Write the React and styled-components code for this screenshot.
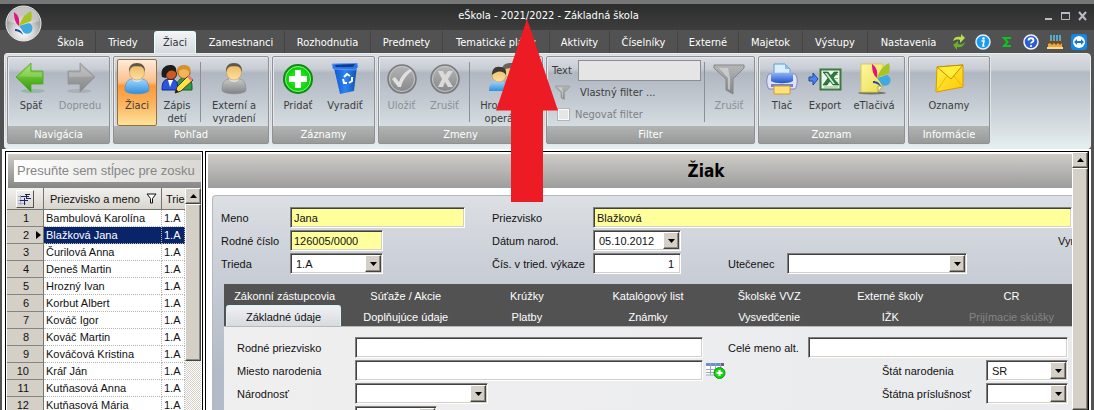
import React from 'react';
import styled, { createGlobalStyle, css } from 'styled-components';

const Global = createGlobalStyle`
  *, *::before, *::after { box-sizing: border-box; }
  body { margin: 0; background: #fff; overflow: hidden; }
  button, input, select { font: inherit; color: inherit; margin: 0; padding: 0; border: 0; border-radius: 0; }
  button { background: none; cursor: pointer; }
  svg { display: block; }
`;

const uiFont = '"DejaVu Sans Condensed", "DejaVu Sans", sans-serif';
const formFont = '"Liberation Sans", Arial, sans-serif';

/* ---------- window ---------- */

const Window = styled.div`
  position: relative;
  display: flex;
  flex-direction: column;
  height: 100vh;
  overflow: hidden;
  padding: 0 3px 0 2px;
  background: #525252;
  font: 11px/13px ${uiFont};
`;

const TitleBar = styled.header`
  display: grid;
  grid-template-columns: 1fr auto 1fr;
  align-items: center;
  flex: none;
  height: 30px;
  margin: 0 -3px 0 -2px;
  padding: 0 5px 3px 8px;
  border-top: 4px solid #767676;
  background: linear-gradient(#2c2e2d, #3d3d3d);
  color: #fff;
`;

const Title = styled.h1`
  grid-column: 2;
  margin: 0;
  font: 11px/13px ${uiFont};
`;

const WindowControls = styled.div`
  display: flex;
  justify-content: flex-end;
  gap: 5px;
`;

const Logo = styled.button`
  position: absolute;
  left: 5px;
  top: 5px;
  width: 37px;
  height: 37px;
`;

const MenuBar = styled.nav`
  display: flex;
  flex: none;
  height: 23px;
  padding-left: 44px;
  background: #525252;
`;

const MenuTab = styled.button`
  width: ${(p) => p.$w}px;
  height: 22px;
  margin-top: 1px;
  color: #fff;
  white-space: nowrap;
  border-right: 1px solid ${(p) => (p.$plain ? 'transparent' : '#434343')};
  ${(p) =>
    p.$active &&
    css`
      margin: 1px 2px 0 3px;
      border: 1px solid #e2ffff;
      border-bottom: 0;
      border-radius: 3px 3px 0 0;
      background: linear-gradient(#f3f4f6, #d5d9df);
      color: #333;
    `}
`;

const QuickIcons = styled.div`
  display: flex;
  align-items: center;
  gap: 8px;
  margin-left: auto;
  padding-right: 4px;
`;

/* ---------- ribbon ---------- */

const Ribbon = styled.div`
  display: flex;
  flex: none;
  gap: 3px;
  height: 96px;
  margin: 0 0 0 2px;
  padding: 2px 2px 4px;
  border: 1px solid #e6eeee;
  border-radius: 3px 4px 3px 3px;
  background: linear-gradient(#dadde2 0, #c9cdd5 16px, #b3bac4 18px, #c2c9d0 45px, #dbe3e6 80px, #e6f1f1 96px);
`;

const Group = styled.section`
  display: flex;
  flex-direction: column;
  width: ${(p) => p.$w}px;
  border: 1px solid #8f9194;
  border-radius: 2px;
  box-shadow: 0 0 0 1px #e3e6e9, inset 1px 1px #e6e8ec;
  background: linear-gradient(#d9dce1 0, #c8ccd4 12px, #b0b7c1 16px, #c0c7cf 40px, #d6dee2 70px);
`;

const GroupBody = styled.div`
  display: flex;
  flex: 1;
  padding: 2px 0 0 ${(p) => p.$pad || 1}px;
`;

const GroupCaption = styled.h2`
  margin: 0;
  height: 18px;
  font: 11px/17px ${uiFont};
  text-align: center;
  color: #fff;
  background: linear-gradient(#b2b4b4, #989a99);
`;

const RibbonButton = styled.button`
  display: flex;
  flex-direction: column;
  align-items: center;
  flex: none;
  gap: 4px;
  width: ${(p) => p.$w}px;
  height: 67px;
  padding-top: 3px;
  border: 1px solid transparent;
  border-radius: 2px;
  color: ${(p) => (p.disabled ? '#8b8f94' : '#3c3c3c')};
  line-height: 13px;
  ${(p) =>
    p.$active &&
    css`
      border-color: #95703f;
      background: linear-gradient(#fdeadb 0, #fbc08a 22px, #fa9838 26px, #fbb660 45px, #ffe6a0 66px);
    `}
`;

const Divider = styled.i`
  flex: none;
  width: 1px;
  height: 60px;
  margin: 3px 1px 0 3px;
  background: #8b8f97;
`;

const FilterForm = styled.div`
  display: flex;
  flex-direction: column;
  width: 153px;
  padding-left: 4px;
  color: #3c3c3c;
`;

const FilterLine = styled.div`
  display: flex;
  align-items: center;
  gap: ${(p) => p.$gap}px;
  height: 22px;
  padding-left: ${(p) => p.$pad || 0}px;
  color: ${(p) => (p.$muted ? '#7d8084' : 'inherit')};
`;

const FilterInput = styled.input`
  flex: 1;
  min-width: 0;
  height: 21px;
  border: 1px solid #8c8e91;
  background: #e5e5e5;
`;

const Check = styled.input`
  appearance: none;
  width: 13px;
  height: 13px;
  border: 1px solid #b4b4b4;
  background: #e6e6e6;
  box-shadow: inset 0 0 0 1px #fafafa;
`;

/* ---------- work area ---------- */

const Workspace = styled.main`
  display: flex;
  flex: 1;
  gap: 2px;
  min-height: 0;
  padding: 2px 2px 0 3px;
  background: #fff;
  font: 11px/14px ${formFont};
  color: #111;
`;

const Pane = styled.section`
  display: flex;
  flex-direction: column;
  width: ${(p) => (p.$w ? `${p.$w}px` : 'auto')};
  flex: ${(p) => (p.$w ? 'none' : '1')};
  min-width: 0;
  border: solid #000;
  border-width: 1px 1px 0;
  padding-top: 2px;
  overflow: hidden;
`;

const GroupByBar = styled.div`
  flex: none;
  height: 34px;
  margin: 0 1px 0 2px;
  padding: 6px 0 6px 6px;
  background: linear-gradient(#cfccc6, #868686);
`;

const GroupByHint = styled.p`
  margin: 0;
  height: 22px;
  padding-left: 3px;
  overflow: hidden;
  white-space: nowrap;
  font-size: 13px;
  line-height: 21px;
  color: #868686;
  background: linear-gradient(90deg, #fff, #d9d8d4);
`;

const ListBody = styled.div`
  display: flex;
  flex: 1;
  min-height: 0;
  overflow: hidden;
  padding: 0 1px;
`;

const Table = styled.table`
  flex: 1;
  width: 178px;
  height: max-content;
  table-layout: fixed;
  border-collapse: separate;
  border-spacing: 0;
`;

const HeadCell = styled.th`
  height: 22px;
  padding: 0 0 0 ${(p) => p.$pad || 6}px;
  overflow: hidden;
  white-space: nowrap;
  text-align: left;
  font-weight: normal;
  background: linear-gradient(#f2f1ee, #d8d5ce);
  border-right: 1px solid #77756f;
  border-bottom: 1px solid #77756f;
  &:last-child { border-right: 0; }
`;

const HeadLabel = styled.span`
  display: flex;
  align-items: center;
  justify-content: space-between;
  padding-right: 4px;
`;

const ColumnButton = styled.button`
  display: grid;
  place-items: center;
  width: 18px;
  height: 18px;
  border: 1px solid;
  border-color: #fff #55534e #55534e #fff;
`;

const NumberCell = styled.th`
  position: relative;
  height: 17px;
  padding: 0 14px 0 0;
  text-align: right;
  font: 11px/16px ${formFont};
  background: #d4d0c8;
  border-right: 1px solid #77756f;
  border-bottom: 1px solid #86847e;
  ${(p) =>
    p.$current &&
    css`
      &::after {
        content: '';
        position: absolute;
        right: 2px;
        top: 4px;
        border: 4px solid transparent;
        border-left: 5px solid #000;
        border-right: 0;
      }
    `}
`;

const Cell = styled.td`
  height: 17px;
  padding: 0 0 0 2px;
  overflow: hidden;
  white-space: nowrap;
  line-height: 16px;
  border-right: 1px dotted #b5b5b5;
  border-bottom: 1px dotted #b5b5b5;
  ${(p) => p.$selected && css`background: #0a246a; color: #fff;`}
`;

const ScrollBar = styled.div`
  display: flex;
  flex-direction: column;
  flex: none;
  width: 16px;
  background: repeating-conic-gradient(#d4d0c8 0 25%, #fff 0 50%) 0 0 / 2px 2px;
`;

const raised = css`
  background: #d4d0c8;
  border: 1px solid;
  border-color: #fff #45433f #45433f #fff;
  box-shadow: inset -1px -1px #8d8a84;
`;

const ScrollButton = styled.button`
  display: grid;
  place-items: center;
  flex: none;
  height: 16px;
  ${raised}
`;

const Thumb = styled.div`
  height: ${(p) => p.$h};
  ${raised}
`;

/* ---------- record form ---------- */

const RecordRow = styled.div`
  display: flex;
  flex: 1;
  min-height: 0;
  margin-top: -2px;
`;

const Record = styled.div`
  display: flex;
  flex-direction: column;
  flex: 1;
  min-width: 0;
  padding: 2px 0 0 2px;
`;

const RecordTitle = styled.h2`
  flex: none;
  height: 34px;
  margin: 0 0 7px;
  padding-left: 132px;
  text-align: center;
  font: bold 17px/34px ${uiFont};
  color: #000;
  background: linear-gradient(#cfccc7, #9d9d9d);
`;

const Card = styled.div`
  display: flex;
  flex-direction: column;
  flex: 1;
  min-height: 0;
  overflow: hidden;
  margin-left: 4px;
  padding-top: 10px;
  border: solid #b5b7ba;
  border-width: 1px 0 0 1px;
  border-radius: 4px 0 0 0;
  background: linear-gradient(#dcdfe3, #c8cdd6 80px, #b2bbc7 175px);
`;

const HeaderRow = styled.div`
  display: grid;
  grid-template-columns: 69px 202px 101px 1fr;
  align-items: center;
  flex: none;
  height: 23px;
  padding-left: 8px;
`;

const Inline = styled.div`
  display: flex;
  align-items: center;
  min-width: 0;
`;

const Label = styled.label`
  white-space: nowrap;
  padding-left: ${(p) => p.$indent || 0}px;
  width: ${(p) => (p.$w ? `${p.$w}px` : 'auto')};
  margin-left: ${(p) => (p.$end ? 'auto' : 0)};
  flex: none;
`;

const ClippedLabel = styled.span`
  width: 14px;
  margin-left: auto;
  overflow: hidden;
`;

const sunken = css`
  border: 1px solid;
  border-color: #808080 #fff #fff #808080;
  box-shadow: inset 1px 1px #404040, inset -1px -1px #d4d0c8;
  background: ${(p) => (p.$required ? '#ffff9c' : '#fff')};
`;

const TextInput = styled.input`
  width: ${(p) => (p.$w ? `${p.$w}px` : '100%')};
  height: 21px;
  padding: 0 6px 0 3px;
  text-align: ${(p) => (p.$right ? 'right' : 'left')};
  ${sunken}
`;

const Combo = styled.span`
  position: relative;
  display: block;
  flex: none;
  width: ${(p) => p.$w}px;
  height: 21px;
  padding: 2px 18px 2px 5px;
  ${sunken}
  & > input, & > select {
    display: block;
    appearance: none;
    width: 100%;
    height: 15px;
    background: none;
    outline: 0;
  }
`;

const DropButton = styled.span`
  position: absolute;
  right: 1px;
  top: 1px;
  display: grid;
  place-items: center;
  width: 16px;
  height: 17px;
  pointer-events: none;
  ${raised}
`;

const DetailTabs = styled.div`
  display: grid;
  grid-template-columns: repeat(7, 1fr);
  grid-auto-rows: 21px;
  flex: none;
  margin: 9px 0 0 11px;
  background: #525252;
  border-bottom: 1px solid #b9b9b9;
`;

const DetailTab = styled.button`
  color: ${(p) => (p.disabled ? '#858585' : '#fff')};
  padding-top: 2px;
  white-space: nowrap;
  ${(p) =>
    p.$active &&
    css`
      margin: 0 4px 0 2px;
      border: 1px solid #d9f4f4;
      border-bottom: 0;
      border-radius: 3px 3px 0 0;
      background: linear-gradient(#f0f1f3, #d7dade);
      color: #111;
    `}
`;

const DetailPage = styled.div`
  flex: 1;
  min-height: 90px;
  margin-left: 11px;
  padding: 9px 4px 0 13px;
  background: linear-gradient(90deg, #efeff0, #eaebed);
`;

const DetailRow = styled.div`
  display: flex;
  align-items: center;
  height: 23px;
`;

const Main = styled.div`
  display: flex;
  flex: 1;
  min-width: 0;
`;

const Side = styled.div`
  display: flex;
  align-items: center;
  width: 365px;
  flex: none;
`;

const LookupButton = styled.button`
  margin-left: 3px;
`;

const PointerArrow = styled.svg`
  position: absolute;
  left: 496px;
  top: 19px;
  pointer-events: none;
`;

const GradientStore = styled.svg`
  position: absolute;
`;

/* ---------- drawings ---------- */

const Gradients = () => (
  <GradientStore width="0" height="0" aria-hidden="true">
    <defs>
      <linearGradient id="green" x1="0" y1="0" x2="0" y2="1"><stop offset="0" stopColor="#9be04e" /><stop offset="1" stopColor="#2e9a0c" /></linearGradient>
      <linearGradient id="grey" x1="0" y1="0" x2="0" y2="1"><stop offset="0" stopColor="#b5b6b8" /><stop offset="1" stopColor="#858688" /></linearGradient>
      <linearGradient id="blue" x1="0" y1="0" x2="0" y2="1"><stop offset="0" stopColor="#a5d6fa" /><stop offset="1" stopColor="#2f8fdf" /></linearGradient>
      <linearGradient id="silver" x1="0" y1="0" x2="0" y2="1"><stop offset="0" stopColor="#c8c8c8" /><stop offset="1" stopColor="#808284" /></linearGradient>
      <linearGradient id="skin" x1="0" y1="0" x2="0" y2="1"><stop offset="0" stopColor="#eebb62" /><stop offset="1" stopColor="#fde0a0" /></linearGradient>
      <linearGradient id="bin" x1="0" y1="0" x2="1" y2="0"><stop offset="0" stopColor="#1457c8" /><stop offset=".5" stopColor="#2b84f2" /><stop offset="1" stopColor="#1450ae" /></linearGradient>
      <linearGradient id="gold" x1="0" y1="0" x2="1" y2="1"><stop offset="0" stopColor="#fff04a" /><stop offset="1" stopColor="#ffc800" /></linearGradient>
      <linearGradient id="print" x1="0" y1="0" x2="0" y2="1"><stop offset="0" stopColor="#8db0f4" /><stop offset="1" stopColor="#1d55d0" /></linearGradient>
      <linearGradient id="paper" x1="0" y1="0" x2="1" y2="1"><stop offset="0" stopColor="#fdf8a0" /><stop offset="1" stopColor="#ebdc55" /></linearGradient>
      <radialGradient id="lime"><stop offset="0" stopColor="#3dfb2c" /><stop offset="1" stopColor="#00c800" /></radialGradient>
      <radialGradient id="orb" cy=".75"><stop offset="0" stopColor="#fff" /><stop offset=".6" stopColor="#d4d4d4" /><stop offset="1" stopColor="#a5a5a5" /></radialGradient>
    </defs>
  </GradientStore>
);

const Butterfly = () => (
  <>
    <path d="M1 1c4 3 6 6 5 14C2 12 1 7 1 1z" fill="#e5127d" />
    <path d="M6 15C8 8 12 3 18 0c1 4 1 7 0 10z" fill="#a9c322" />
    <path d="M6 15l10-3c5 2 4 8 1 10-4 2-7 0-8-3z" fill="#3fa9e0" />
    <path d="M2 18c4 0 7 2 8 6-3-3-5-4-8-4z" fill="#1f4c9c" />
  </>
);

const LogoIcon = () => (
  <svg width="37" height="37" viewBox="0 0 37 37">
    <circle cx="18.500" cy="18.500" r="17.500" fill="url(#orb)" stroke="#e8e8e8" />
    <path d="M3 16a15.500 14 0 0 1 31 0c-8 4-22 4-31 0z" fill="#fff" opacity=".35" />
    <g transform="translate(8 6)"><Butterfly /></g>
  </svg>
);

const ArrowIcon = ({ forward }) => (
  <svg width="32" height="32" viewBox="0 0 32 32">
    <ellipse cx={forward ? 15 : 18} cy="28" rx="12" ry="2" fill={forward ? '#8a8d90' : '#5aa060'} opacity=".35" />
    <path
      d={forward ? 'M31 14L16 0v8H4v13h12v8z' : 'M1 14L16 0v8h12v13H16v8z'}
      fill={forward ? 'url(#grey)' : 'url(#green)'}
      stroke={forward ? '#909294' : '#4aa825'}
      strokeWidth=".8"
    />
    <path d={forward ? 'M29 13.500L17 3v6.500H5V14z' : 'M3 13.500L15 3v6.500h12V14z'} fill="#fff" opacity=".2" />
  </svg>
);

const PersonIcon = ({ grey }) => (
  <svg width="32" height="32" viewBox="0 0 32 32">
    <path d="M4 27c0-8 3-11 8-11h8c5 0 8 3 8 11 0 5-24 5-24 0z" fill={grey ? 'url(#silver)' : 'url(#blue)'} stroke={grey ? '#88898b' : '#3f8ed2'} strokeWidth=".6" />
    <path d="M11 16c2 4 8 4 10 0l-2-2h-6z" fill="#fff" opacity=".55" />
    <circle cx="16" cy="9.500" r="7.500" fill="url(#skin)" stroke="#b98a4a" strokeWidth=".5" />
    <path d="M8 9C7.500 3 11 0 16 0s8.500 3 8 9c-1-3-2-5-4-5.500-3-.5-5-.5-8 0C10 4 9 6 8 9z" fill="#5f584a" />
  </svg>
);

const EnrollIcon = () => (
  <svg width="32" height="32" viewBox="0 0 32 32">
    <path d="M15 27c0-9 4-12 9-12s7 3 7 9v3z" fill="#2f9a4b" stroke="#14602a" />
    <circle cx="23" cy="9.500" r="6" fill="#f3b45a" stroke="#9a5c12" />
    <path d="M16 10c-1-6 3-8 7-8s8 2 6 8c-3-5-9-5-13 0z" fill="#d98f2b" />
    <path d="M1 27c0-8 2-11 8-11s8 3 8 11z" fill="#2b55e0" stroke="#122b80" />
    <path d="M7 17l2 7 3-7z" fill="#fff" />
    <circle cx="10" cy="11" r="5.500" fill="#cc5a20" stroke="#4a1c08" />
    <path d="M1 14C-1 6 4 2 9 2s7 3 6 7C9 5 5 9 5 15z" fill="#1c1c1c" />
    <path d="M14 30l2-6 11-11 5 4-12 11z" fill="#ffe04a" stroke="#4d3c10" />
    <path d="M14 30l1-4 3 3z" fill="#222" />
    <path d="M26 14l2-2 4 4-2 2z" fill="#e47a8a" />
  </svg>
);

const AddIcon = () => (
  <svg width="32" height="32" viewBox="0 0 32 32">
    <circle cx="16" cy="16" r="14" fill="url(#lime)" stroke="#0d8c12" strokeWidth="2" />
    <circle cx="16" cy="16" r="12.500" fill="none" stroke="#b8f5b0" strokeWidth=".8" />
    <path d="M13 7h6v6h6v6h-6v6h-6v-6H7v-6h6z" fill="#fff" />
  </svg>
);

const BinIcon = () => (
  <svg width="32" height="32" viewBox="0 0 32 32">
    <path d="M5 5l23-2-3 25-14 3z" fill="url(#bin)" />
    <path d="M3 1l25-1 1 4-3 3L4 6z" fill="#2a74e6" stroke="#6aa7f5" strokeWidth=".8" />
    <path d="M6 2l20-1-2 3H7z" fill="#0d3c94" />
    <g fill="none" stroke="#fff" strokeWidth="2"><path d="M15 14l3-3 3 2" /><path d="M23 14l0 4-3 2" /><path d="M18 20h-3l-1-4" /></g>
  </svg>
);

const RoundIcon = ({ cross }) => (
  <svg width="32" height="32" viewBox="0 0 32 32">
    <circle cx="16" cy="16" r="14" fill="url(#grey)" stroke="#7a7b7c" strokeWidth="1.500" />
    <circle cx="16" cy="16" r="12.500" fill="none" stroke="#c5c5c5" />
    {cross ? (
      <path d="M9 8h5l2 4 3-4h5l-5 8 5 8h-5l-3-5-2 5H9l4-8z" fill="#dadada" />
    ) : (
      <path d="M6 16l3-2 4 5C15 13 19 9 24 6l2 2c-6 4-9 9-11 16h-3z" fill="#e0e0e0" />
    )}
  </svg>
);

const BulkIcon = () => (
  <svg width="36" height="32" viewBox="0 0 36 32">
    <path d="M15 24c0-8 3-10 8-10s9 3 9 10z" fill="url(#silver)" />
    <circle cx="23" cy="8" r="6.500" fill="url(#skin)" />
    <path d="M14 7c0-5 4-7 9-7s8 3 7 9c-5-5-9-4-16-2z" fill="#6a6458" />
    <path d="M1 28c0-7 3-10 9-10s10 3 10 10z" fill="url(#blue)" />
    <circle cx="11" cy="12" r="7" fill="url(#skin)" stroke="#b98a4a" strokeWidth=".5" />
    <path d="M4 12C4 6 7 3 12 4c4 0 7 2 6 8-4-5-9-4-14 0z" fill="#3d3a34" />
  </svg>
);

const FunnelIcon = ({ size }) => (
  <svg width={size} height={size} viewBox="0 0 32 32">
    <path d="M1 2h30v3L20 16v15l-7-4V16L1 5z" fill="url(#grey)" stroke="#858687" />
    <path d="M6 5h9l2 10v12l-2-1V15z" fill="#e0e0e0" opacity=".6" />
  </svg>
);

const PrinterIcon = () => (
  <svg width="32" height="32" viewBox="0 0 32 32">
    <path d="M8 13V1h11l5 5v7z" fill="#d9efff" stroke="#5d9ce0" />
    <path d="M19 1v5h5z" fill="#8ebcf0" />
    <path d="M3 11c3-1 23-1 26 0 3 3 3 11 0 15H3c-3-4-3-12 0-15z" fill="#dfe2f8" stroke="#8084c0" />
    <path d="M5 10h22v8c-4 3-18 3-22 0z" fill="url(#print)" />
    <path d="M5 21h22v3H5z" fill="#7a80c0" />
    <path d="M8 23h16v8H8z" fill="#ffe27a" stroke="#d09a30" />
  </svg>
);

const ExcelIcon = () => (
  <svg width="34" height="32" viewBox="0 0 34 32">
    <path d="M1 14h4v-4l5 6-5 6v-4H1z" fill="#4f84ea" stroke="#1c46a8" />
    <path d="M12.500 6.500h20v20h-20z" fill="#eef6ec" stroke="#3a7a3c" strokeWidth="2" />
    <path d="M23 11.500h7M24 15.500h6M25 19.500h5M16 24h14" stroke="#8cba8e" />
    <path d="M15 9h5l3 4 3-4h4l-5 6 6 7h-6l-3-4-3 4h-4l5-7z" fill="#2c7d40" stroke="#124f22" strokeWidth=".6" />
    <path d="M17 10h2l8 11h-2z" fill="#d5efd5" />
  </svg>
);

const PrintFormsIcon = () => (
  <svg width="34" height="32" viewBox="0 0 34 32">
    <ellipse cx="15" cy="30" rx="14" ry="1.500" fill="#50563c" opacity=".7" />
    <path d="M4 1h22v22l-5 6H4z" fill="url(#paper)" stroke="#d8cb55" />
    <path d="M26 23h-5v6z" fill="#fffbd0" stroke="#b5a83a" />
    <g transform="translate(14 0)"><Butterfly /></g>
  </svg>
);

const EnvelopeIcon = () => (
  <svg width="32" height="32" viewBox="0 0 32 32">
    <path d="M4 4l26-2v22L3 29z" fill="url(#gold)" stroke="#d89a00" />
    <path d="M4 4l14 12L30 2z" fill="#ffee38" stroke="#c98a00" />
    <path d="M3 29l11-16M30 24l-9-11" stroke="#f0b800" />
  </svg>
);

const DownGlyph = () => (
  <svg width="7" height="4" viewBox="0 0 7 4"><path d="M0 0h7L3.500 4z" fill="#000" /></svg>
);
const UpGlyph = () => (
  <svg width="7" height="4" viewBox="0 0 7 4"><path d="M0 4h7L3.500 0z" fill="#000" /></svg>
);

const quickIcons = [
  ['Obnoviť', <svg width="16" height="16" viewBox="0 0 16 16"><path d="M2 7c1-4 4-5 8-4V0l4 4-5 5V6C6 5 4 6 2 7z" fill="#b4e04c" /><path d="M14 8c-1 4-4 6-8 5v3l-4-5 5-4v3c3 1 5 0 7-2z" fill="#6cae28" /></svg>],
  ['Informácie', <svg width="16" height="16" viewBox="0 0 16 16"><circle cx="8" cy="8" r="7" fill="#1a9af0" stroke="#d8f0ff" strokeWidth="1.500" /><circle cx="8.500" cy="4.500" r="1.300" fill="#fff" /><path d="M6.500 7H9l-1 5h1.500" fill="none" stroke="#fff" strokeWidth="1.500" /></svg>],
  ['Súčty', <svg width="16" height="16" viewBox="0 0 16 16"><path d="M11 5V4H5l3.500 4L5 12h6v-1" fill="none" stroke="#0cc51c" strokeWidth="2" /></svg>],
  ['Pomocník', <svg width="16" height="16" viewBox="0 0 16 16"><circle cx="8" cy="8" r="7" fill="#2b5fd0" stroke="#f2f6ff" strokeWidth="1.500" /><path d="M5.500 6.500c0-3 5-3 5 0 0 1.500-2.500 1.500-2.500 3" fill="none" stroke="#fff" strokeWidth="1.800" /><circle cx="8" cy="12" r="1.100" fill="#fff" /></svg>],
  ['Narodeniny', <svg width="16" height="16" viewBox="0 0 16 16"><path d="M4 1v6M7 1v6M10 1v6M13 1v6" stroke="#56c8ee" strokeWidth="1.500" /><path d="M1 7h14v6H1z" fill="#e8a93f" /><path d="M1 7h14v2l-2 2-2-2-2 2-2-2-2 2-2-2-2 1z" fill="#7a4a18" /><path d="M0 13h16v2H0z" fill="#f6dc98" /></svg>],
  ['Vzdialená pomoc', <svg width="16" height="16" viewBox="0 0 16 16"><rect width="16" height="16" rx="3" fill="#1189e8" /><circle cx="8" cy="8" r="6" fill="#fff" /><path d="M3 8l3-3v2h4V5l3 3-3 3V9H6v2z" fill="#1478d0" /></svg>],
];

const menu = [
  ['Škola', 50], ['Triedy', 55], ['Žiaci', 42], ['Zamestnanci', 87], ['Rozhodnutia', 86], ['Predmety', 72],
  ['Tematické plány', 107], ['Aktivity', 60], ['Číselníky', 68], ['Externé', 61], ['Majetok', 64], ['Výstupy', 65], ['Nastavenia', 82],
];

const students = [
  'Bambulová Karolína', 'Blažková Jana', 'Čurilová Anna', 'Deneš Martin', 'Hrozný Ivan', 'Korbut Albert', 'Kováč Igor',
  'Kováč Martin', 'Kováčová Kristina', 'Kráľ Ján', 'Kutňasová Anna', 'Kutňasová Mária',
];

const detailTabs = [
  'Zákonní zástupcovia', 'Súťaže / Akcie', 'Krúžky', 'Katalógový list', 'Školské VVZ', 'Externé školy', 'CR',
  'Základné údaje', 'Doplňujúce údaje', 'Platby', 'Známky', 'Vysvedčenie', 'IŽK', 'Prijímacie skúšky',
];

function Action({ icon, children, ...rest }) {
  return (
    <RibbonButton type="button" {...rest}>
      {icon}
      <span>{children}</span>
    </RibbonButton>
  );
}

function RibbonGroup({ title, w, pad, children }) {
  return (
    <Group $w={w}>
      <GroupBody $pad={pad}>{children}</GroupBody>
      <GroupCaption>{title}</GroupCaption>
    </Group>
  );
}

function Select({ id, w, value = '', label }) {
  return (
    <Combo $w={w}>
      <select id={id} aria-label={label} defaultValue={value}><option>{value}</option></select>
      <DropButton><DownGlyph /></DropButton>
    </Combo>
  );
}

export default function App() {
  return (
    <Window>
      <Global />
      <Gradients />
      <TitleBar>
        <Title>eŠkola - 2021/2022 - Základná škola</Title>
        <WindowControls>
          <button type="button" aria-label="Minimalizovať"><svg width="12" height="12"><path d="M2 9h7" stroke="#b9bcc4" strokeWidth="2" /></svg></button>
          <button type="button" aria-label="Maximalizovať"><svg width="12" height="12"><path d="M1.500 3v6.500h8V3" fill="none" stroke="#b9bcc4" /><path d="M1 3h9" stroke="#b9bcc4" strokeWidth="2" /></svg></button>
          <button type="button" aria-label="Zavrieť"><svg width="12" height="12"><path d="M2 2l7 8M9 2l-7 8" stroke="#b9bcc4" strokeWidth="2" /></svg></button>
        </WindowControls>
      </TitleBar>
      <MenuBar>
        {menu.map(([name, w]) => (
          <MenuTab key={name} type="button" $w={w} $active={name === 'Žiaci'} $plain={name === 'Triedy' || name === 'Nastavenia'}>{name}</MenuTab>
        ))}
        <QuickIcons>
          {quickIcons.map(([name, icon]) => <button key={name} type="button" aria-label={name}>{icon}</button>)}
        </QuickIcons>
      </MenuBar>
      <Logo type="button" aria-label="eŠkola"><LogoIcon /></Logo>

      <Ribbon>
        <RibbonGroup title="Navigácia" w={103}>
          <Action $w={44} icon={<ArrowIcon />}>Späť</Action>
          <Action $w={54} disabled icon={<ArrowIcon forward />}>Dopredu</Action>
        </RibbonGroup>
        <RibbonGroup title="Pohľad" w={156} pad={3}>
          <Action $w={40} $active icon={<PersonIcon />}>Žiaci</Action>
          <Action $w={40} icon={<EnrollIcon />}>Zápis<br />detí</Action>
          <Divider />
          <Action $w={64} icon={<PersonIcon grey />}>Externí a<br />vyradení</Action>
        </RibbonGroup>
        <RibbonGroup title="Záznamy" w={103}>
          <Action $w={48} icon={<AddIcon />}>Pridať</Action>
          <Action $w={46} icon={<BinIcon />}>Vyradiť</Action>
        </RibbonGroup>
        <RibbonGroup title="Zmeny" w={165}>
          <Action $w={43} disabled icon={<RoundIcon />}>Uložiť</Action>
          <Action $w={43} disabled icon={<RoundIcon cross />}>Zrušiť</Action>
          <Divider />
          <Action $w={70} icon={<BulkIcon />}>Hromadné<br />operácie</Action>
        </RibbonGroup>
        <RibbonGroup title="Filter" w={209}>
          <FilterForm>
            <FilterLine $gap={6}>
              <label htmlFor="filter-text">Text</label>
              <FilterInput id="filter-text" />
            </FilterLine>
            <FilterLine as="button" type="button" $gap={10} $pad={3}>
              <FunnelIcon size={15} />Vlastný filter ...
            </FilterLine>
            <FilterLine as="label" $gap={5} $pad={5} $muted>
              <Check type="checkbox" disabled />Negovať filter
            </FilterLine>
          </FilterForm>
          <Divider />
          <Action $w={46} disabled icon={<FunnelIcon size={32} />}>Zrušiť</Action>
        </RibbonGroup>
        <RibbonGroup title="Zoznam" w={147}>
          <Action $w={44} icon={<PrinterIcon />}>Tlač</Action>
          <Action $w={42} icon={<ExcelIcon />}>Export</Action>
          <Action $w={56} icon={<PrintFormsIcon />}>eTlačivá</Action>
        </RibbonGroup>
        <RibbonGroup title="Informácie" w={82}>
          <Action $w={78} icon={<EnvelopeIcon />}>Oznamy</Action>
        </RibbonGroup>
      </Ribbon>

      <Workspace>
        <Pane $w={198}>
          <GroupByBar><GroupByHint>Presuňte sem stĺpec pre zosku</GroupByHint></GroupByBar>
          <ListBody>
            <Table>
              <colgroup><col width="37" /><col width="118" /><col width="23" /></colgroup>
              <thead>
                <tr>
                  <HeadCell $pad={9}>
                    <ColumnButton type="button" aria-label="Výber stĺpcov">
                      <svg width="14" height="14" viewBox="0 0 14 14"><path d="M0 4.500h8M0 8.500h8M0 11.500h8M2.500 3v10" stroke="#a5abd8" /><path d="M3 4.500h8M2 8.500h8M6.500 6v7M8.500 2v5M7 2.500h5M8 6.500h5" stroke="#1b2560" /></svg>
                    </ColumnButton>
                  </HeadCell>
                  <HeadCell>
                    <HeadLabel>
                      Priezvisko a meno
                      <svg width="11" height="11" viewBox="0 0 11 11"><path d="M1 1h9L6.500 5.500V10h-2V5.500z" fill="#fff" stroke="#111" /></svg>
                    </HeadLabel>
                  </HeadCell>
                  <HeadCell $pad={4}>Trie</HeadCell>
                </tr>
              </thead>
              <tbody>
                {students.map((name, i) => (
                  <tr key={name}>
                    <NumberCell scope="row" $current={i === 1}>{i + 1}</NumberCell>
                    <Cell $selected={i === 1}>{name}</Cell>
                    <Cell $selected={i === 1}>1.A</Cell>
                  </tr>
                ))}
              </tbody>
            </Table>
            <ScrollBar>
              <ScrollButton type="button" aria-label="Nahor"><UpGlyph /></ScrollButton>
              <Thumb $h="157px" />
            </ScrollBar>
          </ListBody>
        </Pane>

        <Pane>
          <RecordRow>
            <Record>
              <RecordTitle>Žiak</RecordTitle>
              <Card>
                <HeaderRow>
                  <Label htmlFor="meno">Meno</Label>
                  <TextInput id="meno" $w={175} $required defaultValue="Jana" />
                  <Label htmlFor="priezvisko">Priezvisko</Label>
                  <TextInput id="priezvisko" $required defaultValue="Blažková" />
                </HeaderRow>
                <HeaderRow>
                  <Label htmlFor="rc">Rodné číslo</Label>
                  <TextInput id="rc" $w={93} $required defaultValue="126005/0000" />
                  <Label htmlFor="datum">Dátum narod.</Label>
                  <Inline>
                    <Combo $w={88}>
                      <input id="datum" defaultValue="05.10.2012" />
                      <DropButton><DownGlyph /></DropButton>
                    </Combo>
                    <ClippedLabel>Vyr</ClippedLabel>
                  </Inline>
                </HeaderRow>
                <HeaderRow>
                  <Label htmlFor="trieda">Trieda</Label>
                  <Select id="trieda" w={93} value="1.A" />
                  <Label htmlFor="cislo">Čís. v tried. výkaze</Label>
                  <Inline>
                    <TextInput id="cislo" $w={88} $right defaultValue="1" />
                    <Label htmlFor="utecenec" $indent={47} $w={106}>Utečenec</Label>
                    <Select id="utecenec" w={180} />
                  </Inline>
                </HeaderRow>

                <DetailTabs>
                  {detailTabs.map((name) => (
                    <DetailTab key={name} type="button" $active={name === 'Základné údaje'} disabled={name === 'Prijímacie skúšky'}>{name}</DetailTab>
                  ))}
                </DetailTabs>
                <DetailPage>
                  <DetailRow>
                    <Label htmlFor="rodne" $w={118}>Rodné priezvisko</Label>
                    <Main><TextInput id="rodne" /></Main>
                    <Side>
                      <Label htmlFor="alt" $indent={25} $w={105}>Celé meno alt.</Label>
                      <TextInput id="alt" />
                    </Side>
                  </DetailRow>
                  <DetailRow>
                    <Label htmlFor="miesto" $w={118}>Miesto narodenia</Label>
                    <Main><TextInput id="miesto" /></Main>
                    <Side>
                      <LookupButton type="button" aria-label="Pridať miesto">
                        <svg width="20" height="17" viewBox="0 0 20 17">
                          <path d="M0 1h18v12H0z" fill="#fff" />
                          <path d="M0 1h14v3H0z" fill="#6f8fc8" /><path d="M14 1h4v3h-4z" fill="#8a4a9a" />
                          <path d="M0 7.500h18M0 10.500h18M4.500 1v12M9.500 1v12M14.500 1v12M0 13h10" stroke="#9aa6bd" />
                          <circle cx="13.500" cy="11" r="5.500" fill="url(#lime)" stroke="#18a018" /><path d="M13.500 8v6M10.500 11h6" stroke="#fff" strokeWidth="2" />
                        </svg>
                      </LookupButton>
                      <Label htmlFor="stat" $w={104} $end>Štát narodenia</Label>
                      <Select id="stat" w={82} value="SR" />
                    </Side>
                  </DetailRow>
                  <DetailRow>
                    <Label htmlFor="narodnost" $w={118}>Národnosť</Label>
                    <Main><Select id="narodnost" w={133} /></Main>
                    <Side>
                      <Label htmlFor="prislusnost" $w={104} $end>Štátna príslušnosť</Label>
                      <Select id="prislusnost" w={82} />
                    </Side>
                  </DetailRow>
                  <DetailRow>
                    <Label as="span" $w={118} />
                    <Main><Select w={82} label="Pohlavie" /></Main>
                  </DetailRow>
                </DetailPage>
              </Card>
            </Record>
            <ScrollBar>
              <ScrollButton type="button" aria-label="Nahor"><UpGlyph /></ScrollButton>
              <Thumb $h="100%" />
            </ScrollBar>
          </RecordRow>
        </Pane>
      </Workspace>

      <PointerArrow width="62" height="183" viewBox="0 0 62 183" aria-hidden="true">
        <path d="M31 0l31 91.500H47V183H15V91.500H0z" fill="#ed1c24" />
      </PointerArrow>
    </Window>
  );
}
